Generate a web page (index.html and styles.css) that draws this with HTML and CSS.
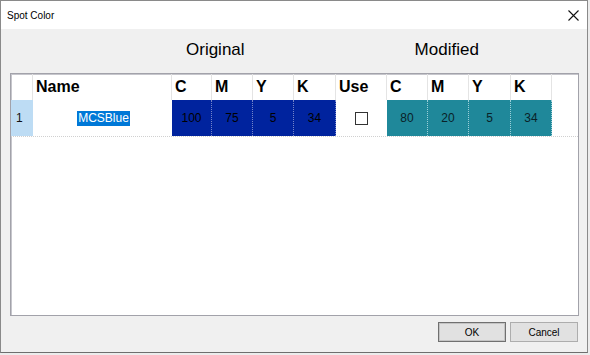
FILE: index.html
```html
<!DOCTYPE html>
<html lang="en">
<head>
  <meta charset="UTF-8" />
  <title>Spot Color</title>
  <link rel="stylesheet" href="styles.css">
</head>
<body>

<div class="dialog">
  <div class="titlebar">
    <span class="title">Spot Color</span>
    <svg class="close" width="11" height="11" viewBox="0 0 11 11">
      <path d="M0.5 0.5 L10.5 10.5 M10.5 0.5 L0.5 10.5" stroke="#111" stroke-width="1.1" fill="none" />
    </svg>
  </div>

  <div class="captions">
    <span class="cap-original">Original</span>
    <span class="cap-modified">Modified</span>
  </div>

  <div class="grid">
    <div class="row head">
      <div class="hcell"></div>
      <div class="hcell">Name</div>
      <div class="hcell">C</div>
      <div class="hcell">M</div>
      <div class="hcell">Y</div>
      <div class="hcell">K</div>
      <div class="hcell">Use</div>
      <div class="hcell">C</div>
      <div class="hcell">M</div>
      <div class="hcell">Y</div>
      <div class="hcell">K</div>
      <div class="hcell filler"></div>
    </div>
    <div class="row data">
      <div class="rownum">1</div>
      <div class="name"><span class="selected">MCSBlue</span></div>
      <div class="cell orig">100</div>
      <div class="cell orig">75</div>
      <div class="cell orig">5</div>
      <div class="cell orig">34</div>
      <div class="use"><span class="checkbox"></span></div>
      <div class="cell mod">80</div>
      <div class="cell mod">20</div>
      <div class="cell mod">5</div>
      <div class="cell mod">34</div>
      <div class="empty"></div>
    </div>
  </div>

  <div class="buttons">
    <button class="btn default">OK</button>
    <button class="btn">Cancel</button>
  </div>
</div>

</body>
</html>
```

FILE: styles.css
```css
body {
  margin: 0;
  background: #ececec;
  font-family: 'Liberation Sans', Arial, sans-serif;
}
.dialog {
  width: 586px;
  height: 351px;
  border: 1px solid #8a8a8a;
  border-bottom-color: #6e6e6e;
  background: #f0f0f0;
  display: flex;
  flex-direction: column;
}
.titlebar {
  height: 28px;
  background: #fff;
  display: flex;
  align-items: center;
  justify-content: space-between;
  padding: 0 8px 0 6px;
}
.title {
  font-size: 10px;
  color: #000;
}
.close {
  display: block;
}
.captions {
  height: 44px;
  box-sizing: border-box;
  padding-top: 11px;
  display: flex;
  font-size: 17px;
  line-height: 20px;
  color: #000;
}
.cap-original {
  margin-left: 185px;
}
.cap-modified {
  margin-left: 170px;
}
.grid {
  margin-left: 9px;
  width: 567px;
  height: 241px;
  border: 1px solid #a2a2aa;
  box-shadow: inset 1px 1px 0 #c6c6cc;
  background: #fff;
}
.row {
  display: grid;
  grid-template-columns: 22px 139px 40px 41px 41px 42px 51px 41px 41px 42px 41px 1fr;
}
.head {
  height: 26px;
}
.hcell {
  box-sizing: border-box;
  border-right: 1px solid #e4e4e4;
  padding-left: 3px;
  font-size: 16px;
  font-weight: bold;
  line-height: 26px;
  color: #000;
}
.hcell.filler {
  border-right: none;
}
.data {
  height: 37px;
  box-sizing: border-box;
  border-bottom: 1px dotted #d0d0d0;
  font-size: 12px;
}
.rownum {
  background: #bddcf4;
  padding-left: 5px;
  display: flex;
  align-items: center;
  color: #111;
}
.name {
  display: flex;
  align-items: center;
  justify-content: center;
  padding-left: 2px;
}
.selected {
  background: #0078d7;
  color: #fff;
  line-height: 15px;
  padding: 0 1px;
}
.cell {
  box-sizing: border-box;
  display: flex;
  align-items: center;
  justify-content: center;
  color: #000;
}
.orig {
  background: #00239e;
  border-right: 1px dotted #7484c8;
}
.mod {
  background: #1f889a;
  border-right: 1px dotted #9ccfd8;
  color: #0a2228;
}
.use {
  display: flex;
  align-items: center;
  justify-content: center;
}
.checkbox {
  width: 11px;
  height: 11px;
  border: 1px solid #333;
  background: #fff;
}
.buttons {
  display: flex;
  justify-content: flex-end;
  gap: 4px;
  margin-top: 6px;
  padding-right: 9px;
}
.btn {
  width: 68px;
  height: 20px;
  margin: 0;
  padding: 0;
  background: #e1e1e1;
  border: 1px solid #adadad;
  font-family: 'Liberation Sans', Arial, sans-serif;
  font-size: 10px;
  color: #000;
}
.btn.default {
  border-color: #707070;
  box-shadow: inset 0 0 0 1px #c4c4c4;
}
```
